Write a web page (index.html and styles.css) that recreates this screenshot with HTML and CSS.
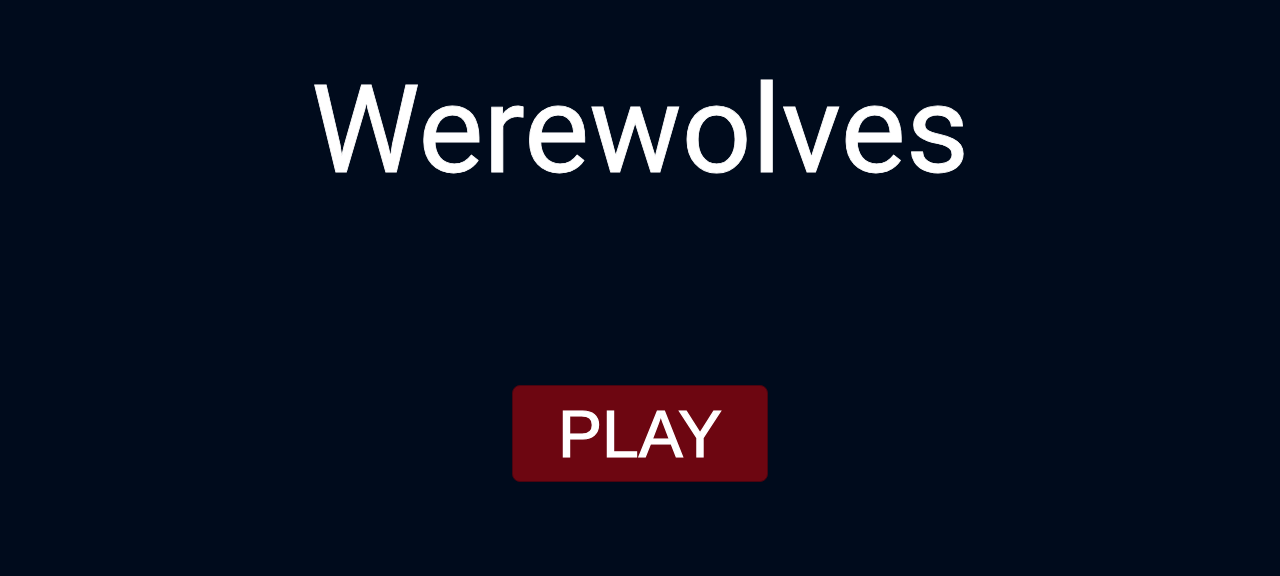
FILE: index.html
```html
<!DOCTYPE html>
<html lang="en">
<head>
  <meta charset="UTF-8" />
  <meta name="viewport" content="width=device-width, initial-scale=1.0"/>
  <title>Werewolves</title>
  <link rel="stylesheet" href="styles.css">
</head>
<body>
  <main class="menu">
    <h1 class="title">Werewolves</h1>
    <button class="play-btn">PLAY</button>
  </main>
</body>
</html>
```

FILE: styles.css
```css
body {
  margin: 0;
  background-color: #000b1c;
  min-height: 100vh;
  font-family: Roboto, "Liberation Sans", sans-serif;
}

.menu {
  display: flex;
  flex-direction: column;
  align-items: center;
  padding-top: 60px;
}

.title {
  margin: 0;
  color: #ffffff;
  font-size: 123px;
  font-weight: 400;
  line-height: 140px;
  -webkit-text-stroke: 0.8px #ffffff;
}

.play-btn {
  margin-top: 185px;
  width: 256px;
  height: 97px;
  padding: 0;
  background-color: #6d0611;
  color: #ffffff;
  border: 1px solid #4a0410;
  border-radius: 8px;
  font-family: "Liberation Sans", Arial, sans-serif;
  font-size: 66px;
  -webkit-text-stroke: 1.2px #ffffff;
  cursor: pointer;
}
```
